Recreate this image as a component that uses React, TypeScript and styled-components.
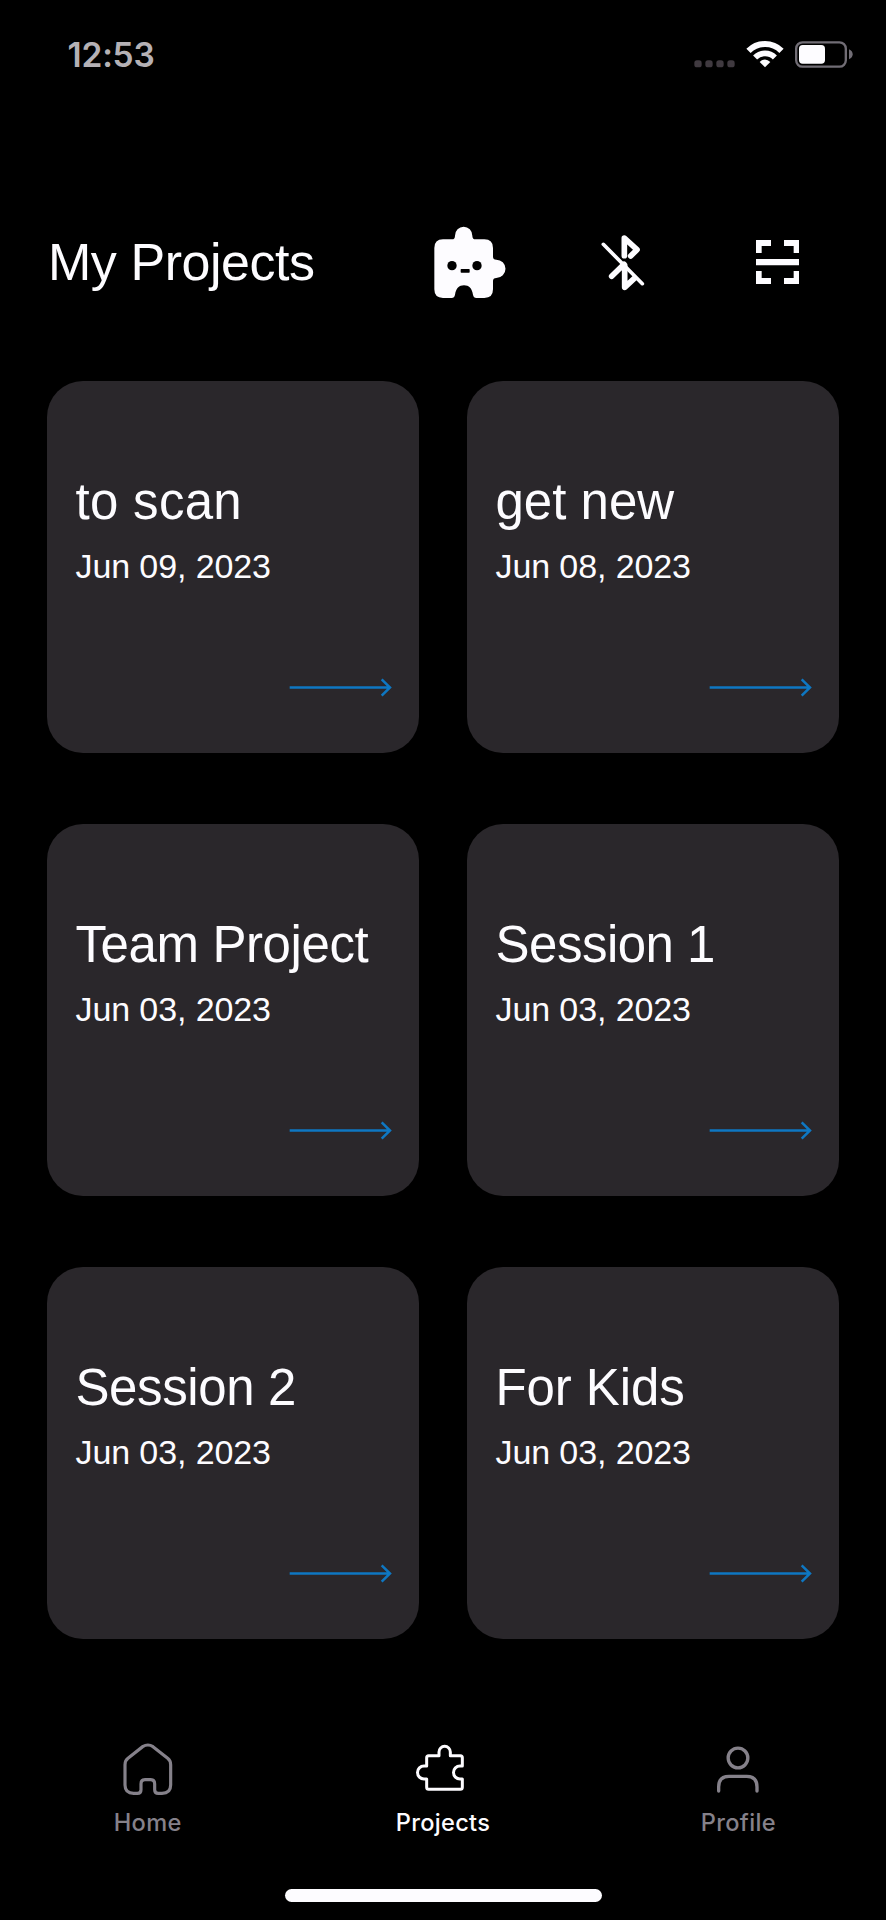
import React from "react";
import styled, { createGlobalStyle } from "styled-components";

const GlobalStyle = createGlobalStyle`
  * { box-sizing: border-box; }
  body { margin: 0; background: #000; }
  svg { display: block; flex: none; overflow: visible; }
`;

const Screen = styled.div`
  width: 886px;
  height: 1920px;
  background: #000;
  color: #fdfcff;
  display: flex;
  flex-direction: column;
  overflow: hidden;
  font-family: "Liberation Sans", Arial, sans-serif;
`;

const StatusBar = styled.div`
  height: 109px;
  padding: 0 33px 0 67.5px;
  display: flex;
  justify-content: space-between;
  align-items: center;
`;

const Time = styled.div`
  font: 600 33.5px/40px Inter, sans-serif;
  color: #b5b1b5;
  letter-spacing: -0.2px;
`;

const StatusIcons = styled.div`
  display: flex;
  align-items: center;
  gap: 12px;
`;

const Header = styled.header`
  height: 104px;
  margin-top: 101px;
  padding-left: 48px;
  display: flex;
  align-items: center;
`;

const Title = styled.h1`
  margin: 0;
  width: 386px;
  font-size: 52px;
  line-height: 60px;
  font-weight: 400;
  letter-spacing: -0.45px;
  white-space: nowrap;
`;

const Actions = styled.div`
  display: flex;
  align-items: center;
`;

const Action = styled.button<{ $gap?: number }>`
  border: 0;
  padding: 0;
  margin: 0 0 0 ${(p) => p.$gap ?? 0}px;
  background: none;
  color: inherit;
`;

const Grid = styled.main`
  margin-top: 66.6px;
  padding: 0 47px;
  display: grid;
  grid-template-columns: 372px 372px;
  grid-auto-rows: 372px;
  gap: 71.2px 48px;
`;

const Card = styled.article`
  background: #2a272b;
  border-radius: 36px;
  padding: 91px 27px 56px 28.5px;
  display: flex;
  flex-direction: column;
`;

const CardTitle = styled.h2<{ $tracking: number }>`
  margin: 0;
  font-size: 51px;
  line-height: 60px;
  font-weight: 400;
  letter-spacing: ${(p) => p.$tracking}px;
  white-space: nowrap;
`;

const CardDate = styled.div`
  margin-top: 14px;
  font-size: 34px;
  line-height: 40px;
  letter-spacing: -0.1px;
  white-space: nowrap;
`;

const ArrowSlot = styled.div`
  margin-top: auto;
  display: flex;
  justify-content: flex-end;
`;

const TabBar = styled.nav`
  margin-top: 104px;
  display: grid;
  grid-template-columns: repeat(3, 1fr);
`;

const Tab = styled.div<{ $active?: boolean }>`
  display: flex;
  flex-direction: column;
  align-items: center;
  gap: 11.4px;
  color: ${(p) => (p.$active ? "#fdfcff" : "#85818a")};
`;

const TabLabel = styled.span`
  font: 500 23.6px/30px Inter, sans-serif;
  letter-spacing: 0.3px;
`;

const HomeIndicator = styled.div`
  width: 317px;
  height: 12.6px;
  border-radius: 7px;
  background: #fdfcff;
  margin: auto auto 18.5px 285px;
`;

const SignalDots = () => (
  <svg width="41" height="27" viewBox="103 62 123 81" fill="#403a40">
    {[115, 148, 181, 214].map((x) => (
      <rect key={x} x={x - 11} y="120" width="22" height="21" rx="8" />
    ))}
  </svg>
);

const Wifi = () => (
  <svg width="36" height="27" viewBox="261 62 108 81" fill="none" stroke="#fdfcff">
    <path d="M265.500 91.500A70 70 0 0 1 364.500 91.500" strokeWidth="18" />
    <path d="M285.300 111.300A42 42 0 0 1 344.700 111.300" strokeWidth="17" />
    <path d="M315 141 299 125Q315 110 331 125Z" fill="#fdfcff" stroke="none" />
  </svg>
);

const Battery = () => (
  <svg width="58" height="27" viewBox="405 63 174 81">
    <rect x="408.500" y="67" width="149" height="73" rx="19" fill="none" stroke="#716d75" strokeWidth="7" />
    <rect x="417" y="75" width="78" height="56" rx="11" fill="#fdfcff" />
    <path d="M567 88Q578 93 578 103T567 118Z" fill="#716d75" />
  </svg>
);

const PuzzleBuddy = () => (
  <svg width="72" height="72.667" viewBox="70 46 216 218">
    <path
      fill="#fdfcff"
      d="M71 112Q71 86 97 86H124Q133 86 133 75A26 27 0 0 1 185 75Q185 86 194 86H221Q247 86 247 112V138Q247 147 257 147A27 27 0 0 1 257 202Q247 202 247 211V236Q247 262 221 262H197Q189 262 187 252C184 233 175 224 160 224S136 233 133 252Q131 262 123 262H97Q71 262 71 236Z"
    />
    <circle cx="124" cy="165" r="14" fill="#000" />
    <circle cx="199" cy="165" r="14" fill="#000" />
    <rect x="150" y="175" width="27" height="11" rx="2" fill="#000" />
  </svg>
);

const BluetoothOff = () => (
  <svg
    width="45"
    height="57"
    viewBox="565 69 135 171"
    fill="none"
    stroke="#fdfcff"
    strokeLinecap="round"
    strokeLinejoin="round"
  >
    <path d="M575 100 692 218" strokeWidth="11" />
    <path d="M638 134V81L676 116 657 135" strokeWidth="17" />
    <path d="M600 196 637 160M639 163V229L668 202" strokeWidth="17" />
  </svg>
);

const Scan = () => (
  <svg width="43.333" height="44.333" viewBox="165 90 130 133" fill="#fdfcff">
    <path d="M165 90h45v18h-28v21h-17zM249 90h45v39h-16v-21h-29zM165 147h129v19h-129zM165 183h17v21h28v18h-45zM278 183h16v39h-45v-18h29z" />
  </svg>
);

const Arrow = () => (
  <svg width="103" height="19" viewBox="779 954 309 57" fill="none" stroke="#0e77c2" strokeWidth="7.5">
    <path d="M781 982.500H1080M1057 958 1082 982.500 1057 1007" />
  </svg>
);

const HomeIcon = () => (
  <svg width="60" height="53.333" viewBox="113 66 180 160" fill="none" stroke="currentColor" strokeWidth="9.5">
    <path d="M187 77Q203 67 218 77L262 112Q271 119 271 131V192Q271 217 245 217H234Q223 217 223 206V189Q223 176 211 176H194Q182 176 182 189V206Q182 217 171 217H160Q134 217 134 192V131Q134 119 143 112Z" />
  </svg>
);

const PuzzleIcon = () => (
  <svg
    width="60"
    height="53.333"
    viewBox="159 66 180 160"
    fill="none"
    stroke="currentColor"
    strokeWidth="9"
    strokeLinejoin="round"
  >
    <path d="M206 104H237V93A17 17 0 0 1 271 93V104H301Q307 104 307 110V135H300A19.500 19.500 0 0 0 300 174H307V199Q307 205 301 205H206Q200 205 200 199V174H192A19.500 19.500 0 0 1 192 135H200V110Q200 104 206 104Z" />
  </svg>
);

const ProfileIcon = () => (
  <svg
    width="60"
    height="53.333"
    viewBox="145 66 180 160"
    fill="none"
    stroke="currentColor"
    strokeWidth="10"
    strokeLinecap="round"
  >
    <circle cx="235" cy="111" r="29.500" />
    <path d="M177 210V198Q177 166 208 166H261Q292 166 292 198V210" />
  </svg>
);

const projects = [
  { name: "to scan", date: "Jun 09, 2023", tracking: 0.3 },
  { name: "get new", date: "Jun 08, 2023", tracking: 0 },
  { name: "Team Project", date: "Jun 03, 2023", tracking: -0.4 },
  { name: "Session 1", date: "Jun 03, 2023", tracking: -0.5 },
  { name: "Session 2", date: "Jun 03, 2023", tracking: -0.4 },
  { name: "For Kids", date: "Jun 03, 2023", tracking: -0.1 },
];

export default function App() {
  return (
    <Screen>
      <GlobalStyle />
      <StatusBar>
        <Time>12:53</Time>
        <StatusIcons>
          <SignalDots />
          <Wifi />
          <Battery />
        </StatusIcons>
      </StatusBar>
      <Header>
        <Title>My Projects</Title>
        <Actions>
          <Action aria-label="Assistant">
            <PuzzleBuddy />
          </Action>
          <Action aria-label="Bluetooth off" $gap={93.5}>
            <BluetoothOff />
          </Action>
          <Action aria-label="Scan" $gap={111.5}>
            <Scan />
          </Action>
        </Actions>
      </Header>
      <Grid>
        {projects.map((p) => (
          <Card key={p.name}>
            <CardTitle $tracking={p.tracking}>{p.name}</CardTitle>
            <CardDate>{p.date}</CardDate>
            <ArrowSlot>
              <Arrow />
            </ArrowSlot>
          </Card>
        ))}
      </Grid>
      <TabBar>
        <Tab>
          <HomeIcon />
          <TabLabel>Home</TabLabel>
        </Tab>
        <Tab $active>
          <PuzzleIcon />
          <TabLabel>Projects</TabLabel>
        </Tab>
        <Tab>
          <ProfileIcon />
          <TabLabel>Profile</TabLabel>
        </Tab>
      </TabBar>
      <HomeIndicator />
    </Screen>
  );
}
